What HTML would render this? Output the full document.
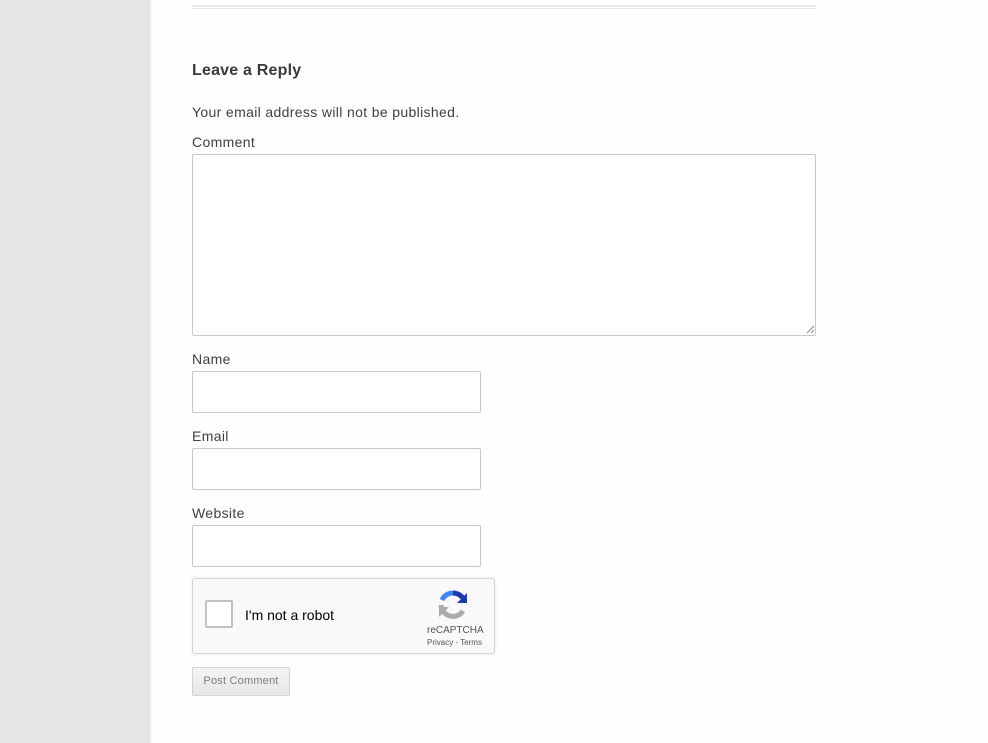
<!DOCTYPE html>
<html><head><meta charset="utf-8"><style>
*{margin:0;padding:0;box-sizing:border-box}
body{width:988px;height:743px;background:#fefefe;position:relative;overflow:hidden;font-family:"Liberation Sans",sans-serif;color:#404040}
.side{position:absolute;left:0;top:0;width:150px;height:743px;background:#e5e5e5;box-shadow:1px 0 2px rgba(0,0,0,.08)}
.a{position:absolute}
.t{font-size:14px;line-height:18px;letter-spacing:0.35px}
.box{position:absolute;border:1px solid #c8c8c8;border-radius:2px;background:#fff}
</style></head><body>
<div class="side"></div>
<div class="a" style="left:192px;top:5px;width:624px;height:2px;background:#ececec"></div>
<div class="a" style="left:192px;top:8px;width:624px;height:1px;background:#e8e8e8"></div>
<div class="a" style="left:192px;top:61px;font-size:16px;font-weight:bold;color:#3a3a3a;line-height:20px;letter-spacing:0.2px">Leave a Reply</div>
<div class="a t" style="left:192px;top:103px">Your email address will not be published.</div>
<div class="a t" style="left:192px;top:133px">Comment</div>
<div class="box" style="left:192px;top:154px;width:624px;height:182px"></div>
<svg class="a" style="left:806px;top:325px" width="9" height="9"><path d="M8 1L1 8M8 5L5 8" stroke="#888" stroke-width="1"/></svg>
<div class="a t" style="left:192px;top:350px">Name</div>
<div class="box" style="left:192px;top:371px;width:289px;height:42px"></div>
<div class="a t" style="left:192px;top:427px">Email</div>
<div class="box" style="left:192px;top:448px;width:289px;height:42px"></div>
<div class="a t" style="left:192px;top:504px">Website</div>
<div class="box" style="left:192px;top:525px;width:289px;height:42px"></div>
<div class="a" style="left:192px;top:578px;width:303px;height:76px;background:#f9f9f9;border:1px solid #d3d3d3;border-radius:3px;box-shadow:0 0 4px rgba(0,0,0,.08)"></div>
<div class="a" style="left:205px;top:600px;width:28px;height:28px;background:#fff;border:2px solid #c1c1c1;border-radius:2px"></div>
<div class="a" style="left:245px;top:606px;font-size:14px;color:#000;line-height:18px">I'm not a robot</div>
<svg class="a" style="left:437px;top:589px" width="32" height="32" viewBox="0 0 32 32">
<path d="M16 4a12 12 0 0 1 11 7" stroke="#1c3aa9" stroke-width="5" fill="none"/>
<path d="M30 4v10H20z" fill="#1c3aa9"/>
<path d="M5 11a12 12 0 0 1 11-7" stroke="#4285f4" stroke-width="5" fill="none"/>
<path d="M4 16a12 12 0 0 0 22 6" stroke="#ababab" stroke-width="5" fill="none"/>
<path d="M2 28V18h10z" fill="#ababab"/>
</svg>
<div class="a" style="left:427px;top:625px;font-size:10px;color:#555;line-height:12px">reCAPTCHA</div>
<div class="a" style="left:427px;top:638px;font-size:8px;color:#555;line-height:10px">Privacy - Terms</div>
<div class="a" style="left:192px;top:667px;width:98px;height:29px;border:1px solid #d2d2d2;border-radius:2px;background:linear-gradient(#f4f4f4,#e6e6e6);font-size:11px;color:#7c7c7c;line-height:27px;text-align:center;letter-spacing:0.2px">Post Comment</div>
</body></html>
